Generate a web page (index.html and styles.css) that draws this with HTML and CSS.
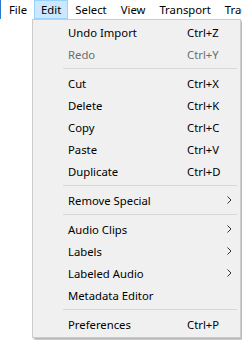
FILE: index.html
```html
<!DOCTYPE html>
<html lang="en">
<head>
    <meta charset="UTF-8">
    <meta name="viewport" content="width=device-width, initial-scale=1.0">
    <title>Edit menu</title>
    <link rel="stylesheet" href="styles.css">
</head>
<body>
    <div class="menubar">
        <span class="bar-item">File</span>
        <span class="bar-item open">Edit</span>
        <span class="bar-item">Select</span>
        <span class="bar-item">View</span>
        <span class="bar-item">Transport</span>
        <span class="bar-item">Tracks</span>
    </div>
    <div class="dropdown">
        <div class="item"><span class="label">Undo Import</span><span class="key">Ctrl+Z</span></div>
        <div class="item disabled"><span class="label">Redo</span><span class="key">Ctrl+Y</span></div>
        <div class="sep"></div>
        <div class="item"><span class="label">Cut</span><span class="key">Ctrl+X</span></div>
        <div class="item"><span class="label">Delete</span><span class="key">Ctrl+K</span></div>
        <div class="item"><span class="label">Copy</span><span class="key">Ctrl+C</span></div>
        <div class="item"><span class="label">Paste</span><span class="key">Ctrl+V</span></div>
        <div class="item"><span class="label">Duplicate</span><span class="key">Ctrl+D</span></div>
        <div class="sep"></div>
        <div class="item"><span class="label">Remove Special</span><span class="key"></span><span class="arrow"><svg width="5" height="8" viewBox="0 0 5 8"><polyline points="0.5,0.5 4,4 0.5,7.5" fill="none" stroke="#333" stroke-width="1"/></svg></span></div>
        <div class="sep"></div>
        <div class="item"><span class="label">Audio Clips</span><span class="key"></span><span class="arrow"><svg width="5" height="8" viewBox="0 0 5 8"><polyline points="0.5,0.5 4,4 0.5,7.5" fill="none" stroke="#333" stroke-width="1"/></svg></span></div>
        <div class="item"><span class="label">Labels</span><span class="key"></span><span class="arrow"><svg width="5" height="8" viewBox="0 0 5 8"><polyline points="0.5,0.5 4,4 0.5,7.5" fill="none" stroke="#333" stroke-width="1"/></svg></span></div>
        <div class="item"><span class="label">Labeled Audio</span><span class="key"></span><span class="arrow"><svg width="5" height="8" viewBox="0 0 5 8"><polyline points="0.5,0.5 4,4 0.5,7.5" fill="none" stroke="#333" stroke-width="1"/></svg></span></div>
        <div class="item"><span class="label">Metadata Editor</span></div>
        <div class="sep"></div>
        <div class="item"><span class="label">Preferences</span><span class="key">Ctrl+P</span></div>
    </div>
</body>
</html>
```

FILE: styles.css
```css
body {
    margin: 0;
    background: #ffffff;
    color: #000000;
    font-family: "Noto Sans", "Open Sans", sans-serif;
    font-size: 11.3px;
    overflow: hidden;
}

/* Top menu bar */
.menubar {
    display: flex;
    height: 19px;
    padding-left: 1px;
    border-left: 1px solid #2b7bd0;
    white-space: nowrap;
}
.bar-item {
    display: flex;
    align-items: center;
    padding: 0 6px;
    border: 1px solid transparent;
    line-height: 17px;
}
.bar-item.open {
    background: #cce8ff;
    border-color: #99d1ff;
}

/* Dropdown panel */
.dropdown {
    position: absolute;
    top: 19px;
    left: 32px;
    width: 207px;
    padding: 1px 0 2px;
    background: #f0f0f0;
    border: 1px solid #cccccc;
    box-shadow: 2px 2px 2px rgba(0, 0, 0, .3);
}
.item {
    display: flex;
    align-items: center;
    height: 22px;
    padding-left: 35px;
}
.item.disabled {
    color: #6d6d6d;
}
.label {
    width: 119px;
}
.key {
    width: 40px;
}
.arrow {
    display: flex;
}
.sep {
    height: 1px;
    margin: 3px 3px 3px 30px;
    background: #d7d7d7;
}
```
